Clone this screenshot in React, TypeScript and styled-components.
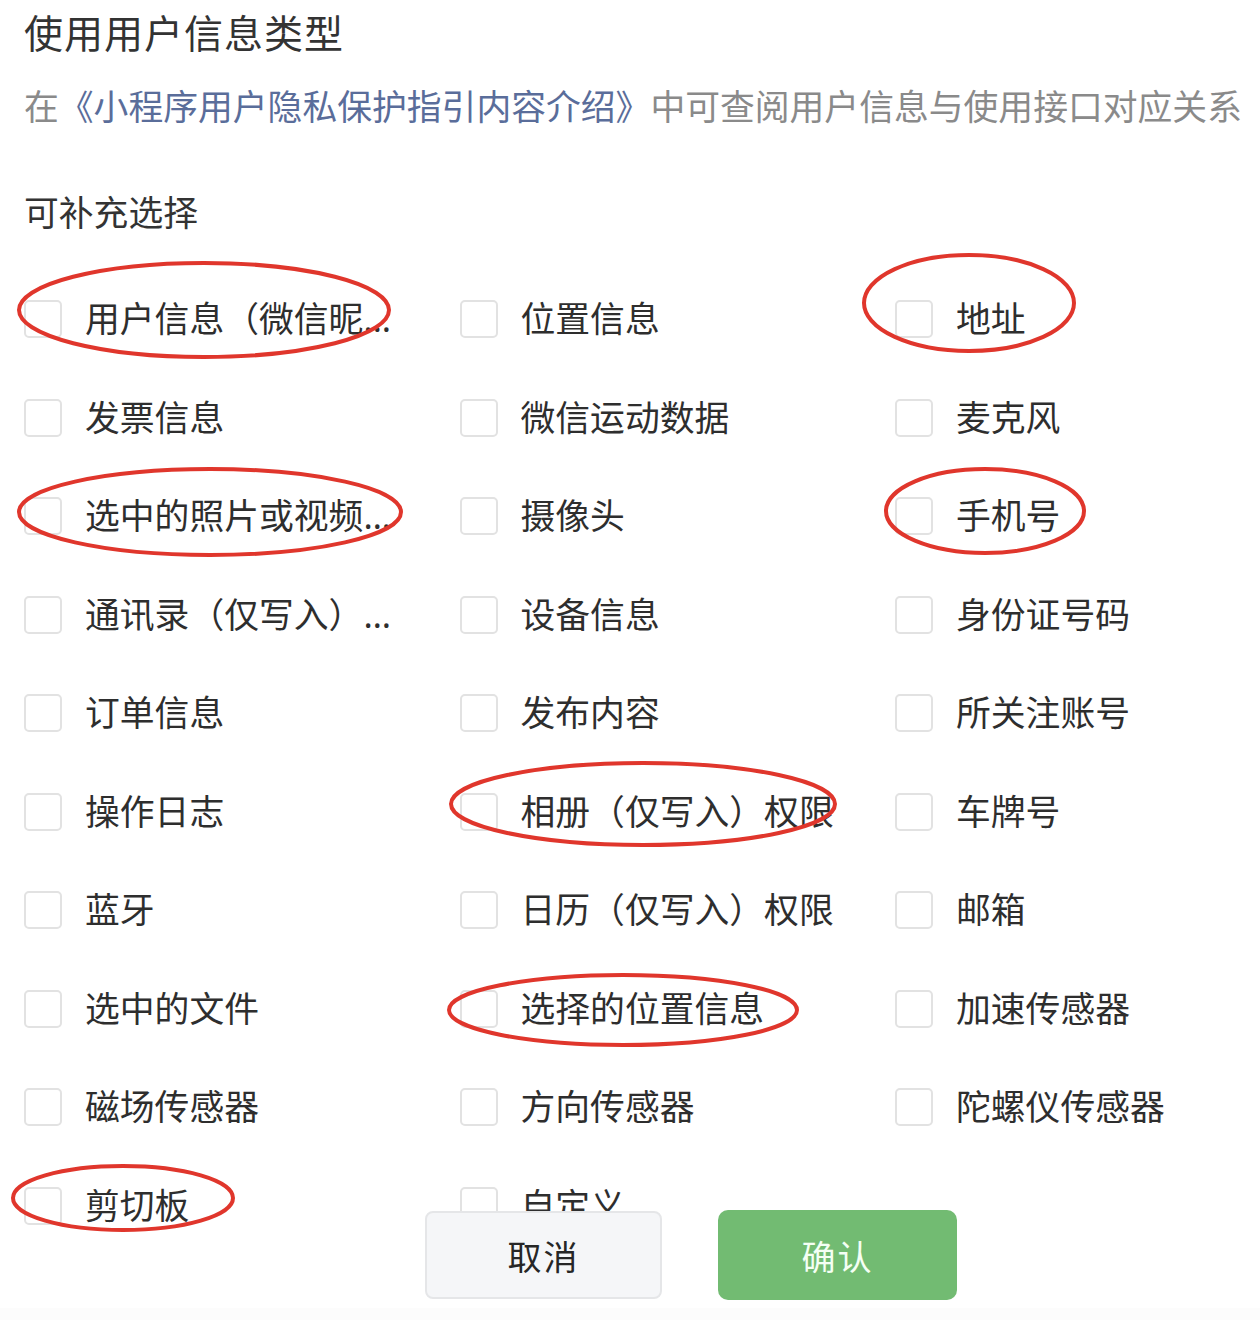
import React from "react";
import styled, { createGlobalStyle } from "styled-components";

const GlobalStyle = createGlobalStyle`
  html, body {
    margin: 0;
    padding: 0;
    background: #fcfcfc;
  }
  body {
    font-family: "Noto Sans CJK SC", "Noto Sans", sans-serif;
  }
`;

const Page = styled.div`
  position: relative;
  width: 1260px;
  height: 1308px;
  background: #ffffff;
  overflow: hidden;
  padding: 12px 0 0 24px;
  box-sizing: border-box;
`;

const Title = styled.h1`
  margin: 0;
  font-size: 39px;
  line-height: 38px;
  font-weight: 400;
  color: #333333;
  letter-spacing: 1px;
`;

const Desc = styled.p`
  margin: 30px 0 0;
  font-size: 34.8px;
  line-height: 50px;
  color: #8a8a8a;
  white-space: nowrap;
`;

const Link = styled.span`
  color: #5a6d9a;
`;

const Section = styled.div`
  margin-top: 56px;
  font-size: 34.8px;
  line-height: 50px;
  color: #333333;
`;

const Grid = styled.div`
  margin-top: 34px;
  display: grid;
  grid-template-columns: repeat(3, 435.5px);
  grid-auto-rows: 98.5px;
`;

const Item = styled.label`
  display: flex;
  align-items: center;
  gap: 23px;
  min-width: 0;
`;

const Box = styled.span`
  flex: 0 0 auto;
  width: 38px;
  height: 38px;
  box-sizing: border-box;
  border: 2px solid #e2e2e2;
  border-radius: 5px;
  background: #fff;
`;

const Label = styled.span`
  max-width: 316px;
  font-family: "Noto Sans", "Noto Sans CJK SC", sans-serif;
  font-size: 34.8px;
  line-height: 52px;
  color: #2e2e2e;
  white-space: nowrap;
  overflow: hidden;
  text-overflow: ellipsis;
`;

const Marks = styled.svg`
  position: absolute;
  left: 0;
  top: 0;
  pointer-events: none;
`;

const Footer = styled.div`
  position: absolute;
  left: 0;
  bottom: 8px;
  display: flex;
  align-items: center;
  gap: 56px;
  padding-left: 425px;
`;

const Button = styled.button<{ $primary?: boolean }>`
  width: ${(p) => (p.$primary ? "239px" : "237px")};
  height: ${(p) => (p.$primary ? "90px" : "88px")};
  border-radius: ${(p) => (p.$primary ? "10px" : "8px")};
  border: ${(p) => (p.$primary ? "none" : "2px solid #e5e6e8")};
  background: ${(p) => (p.$primary ? "#72bb72" : "#f5f6f8")};
  color: ${(p) => (p.$primary ? "#f4fff4" : "#262626")};
  font-family: "Noto Sans CJK SC", sans-serif;
  font-size: 34px;
  letter-spacing: 2px;
  cursor: pointer;
`;

const items = [
  "用户信息（微信昵称、头像）",
  "位置信息",
  "地址",
  "发票信息",
  "微信运动数据",
  "麦克风",
  "选中的照片或视频信息",
  "摄像头",
  "手机号",
  "通讯录（仅写入）权限",
  "设备信息",
  "身份证号码",
  "订单信息",
  "发布内容",
  "所关注账号",
  "操作日志",
  "相册（仅写入）权限",
  "车牌号",
  "蓝牙",
  "日历（仅写入）权限",
  "邮箱",
  "选中的文件",
  "选择的位置信息",
  "加速传感器",
  "磁场传感器",
  "方向传感器",
  "陀螺仪传感器",
  "剪切板",
  "自定义",
];

// red annotation rings drawn over the list
const rings = [
  { cx: 204, cy: 310, rx: 185, ry: 47 },
  { cx: 969, cy: 303, rx: 105, ry: 48 },
  { cx: 210, cy: 512, rx: 191, ry: 43 },
  { cx: 985, cy: 511, rx: 99, ry: 42 },
  { cx: 643, cy: 804, rx: 192, ry: 41 },
  { cx: 623, cy: 1010, rx: 174, ry: 35 },
  { cx: 123, cy: 1198, rx: 110, ry: 32 },
];

export default function App() {
  return (
    <>
      <GlobalStyle />
      <Page>
        <Title>使用用户信息类型</Title>
        <Desc>
          在<Link>《小程序用户隐私保护指引内容介绍》</Link>中可查阅用户信息与使用接口对应关系
        </Desc>
        <Section>可补充选择</Section>
        <Grid>
          {items.map((name) => (
            <Item key={name}>
              <Box />
              <Label>{name}</Label>
            </Item>
          ))}
        </Grid>
        <Marks width="1260" height="1308" viewBox="0 0 1260 1308">
          {rings.map((r, i) => (
            <ellipse
              key={i}
              cx={r.cx}
              cy={r.cy}
              rx={r.rx}
              ry={r.ry}
              fill="none"
              stroke="#e0362c"
              strokeWidth="4"
            />
          ))}
        </Marks>
        <Footer>
          <Button>取消</Button>
          <Button $primary>确认</Button>
        </Footer>
      </Page>
    </>
  );
}
